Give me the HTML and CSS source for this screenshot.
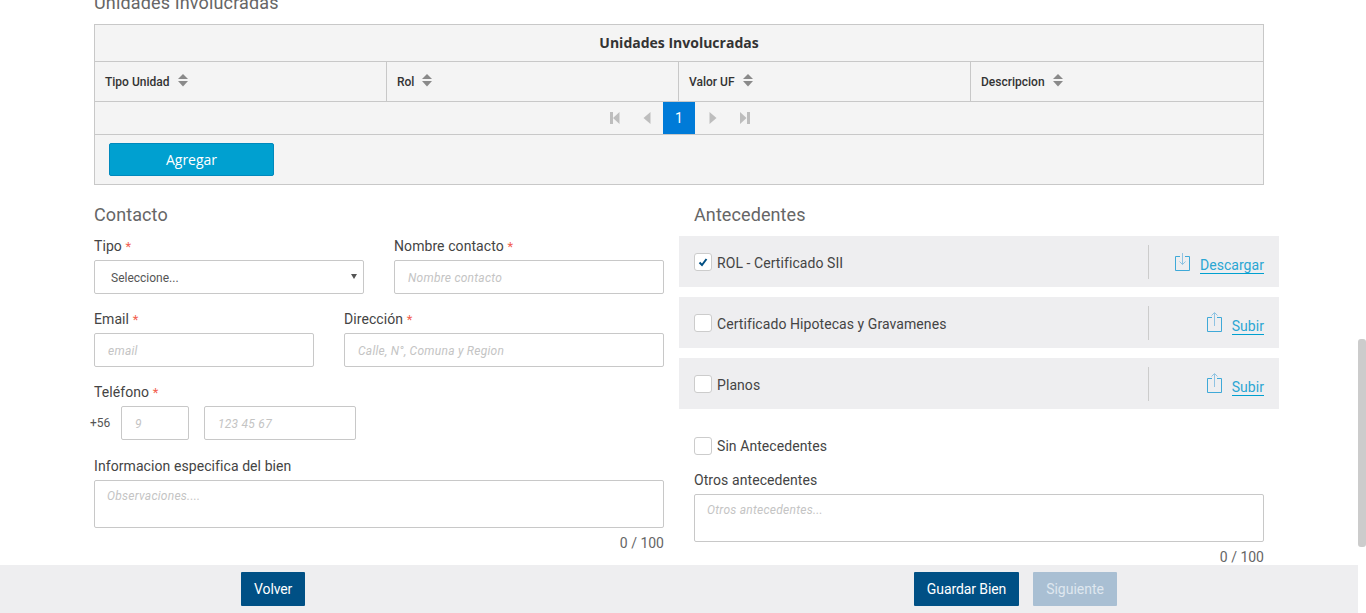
FILE: index.html
```html
<!DOCTYPE html>
<html lang="es">
<head>
<meta charset="utf-8">
<title>Bien</title>
<link rel="stylesheet" href="styles.css">
</head>
<body>
<div class="page">
  <main class="content">
    <h2 class="section-title clipped">Unidades Involucradas</h2>
    <section class="grid-table">
      <div class="table-title">Unidades Involucradas</div>
      <div class="table-head">
        <div class="th">Tipo Unidad <svg class="sort" viewBox="0 0 10 13"><path d="M5 0l5 5H0z"/><path d="M0 7h10l-5 5.500z"/></svg></div>
        <div class="th">Rol <svg class="sort" viewBox="0 0 10 13"><path d="M5 0l5 5H0z"/><path d="M0 7h10l-5 5.500z"/></svg></div>
        <div class="th">Valor UF <svg class="sort" viewBox="0 0 10 13"><path d="M5 0l5 5H0z"/><path d="M0 7h10l-5 5.500z"/></svg></div>
        <div class="th">Descripcion <svg class="sort" viewBox="0 0 10 13"><path d="M5 0l5 5H0z"/><path d="M0 7h10l-5 5.500z"/></svg></div>
      </div>
      <div class="pager">
        <span class="pg back"><svg viewBox="0 0 10 12"><path d="M0 0h3v12H0zM9.500 0v12L3 6z"/></svg></span>
        <span class="pg back"><svg viewBox="0 0 10 12"><path d="M8.500 0v12L1.500 6z"/></svg></span>
        <span class="pg current">1</span>
        <span class="pg fwd"><svg viewBox="0 0 10 12"><path d="M1.500 0v12l7-6z"/></svg></span>
        <span class="pg fwd"><svg viewBox="0 0 10 12"><path d="M0 0v12l6.500-6zM7 0h3v12H7z"/></svg></span>
      </div>
      <div class="table-foot"><button class="btn-add" type="button">Agregar</button></div>
    </section>

    <div class="columns">
      <section class="col">
        <h2 class="section-title">Contacto</h2>
        <div class="row two-even">
          <div class="field">
            <label class="lbl">Tipo <span class="req">*</span></label>
            <div class="select">Seleccione...<span class="caret"></span></div>
          </div>
          <div class="field">
            <label class="lbl">Nombre contacto <span class="req">*</span></label>
            <input class="input" placeholder="Nombre contacto">
          </div>
        </div>
        <div class="row two-wide">
          <div class="field">
            <label class="lbl">Email <span class="req">*</span></label>
            <input class="input" placeholder="email">
          </div>
          <div class="field">
            <label class="lbl">Dirección <span class="req">*</span></label>
            <input class="input" placeholder="Calle, N°, Comuna y Region">
          </div>
        </div>
        <div class="field phone-field">
          <label class="lbl">Teléfono <span class="req">*</span></label>
          <div class="phone">
            <span class="prefix">+56</span>
            <input class="input code" placeholder="9">
            <input class="input number" placeholder="123 45 67">
          </div>
        </div>
        <div class="field info-field">
          <label class="lbl">Informacion especifica del bien</label>
          <textarea class="area" placeholder="Observaciones...."></textarea>
          <div class="counter">0 / 100</div>
        </div>
      </section>

      <section class="col">
        <h2 class="section-title">Antecedentes</h2>
        <div class="doc-list">
          <div class="doc">
            <span class="check"><svg viewBox="0 0 16 16"><path d="M4.500 8.500l2.500 2.500 4.500-6" fill="none" stroke="#004f83" stroke-width="2"/></svg></span>
            <span class="doc-name">ROL - Certificado SII</span>
            <span class="doc-action">
              <svg class="doc-icon down" viewBox="0 0 15 18"><path d="M5 3.500H.5v14h14v-14H10" fill="none" stroke="#3fa9d8"/><path d="M7.500 0v11.500M4.500 8.500l3 3 3-3" fill="none" stroke="#8fc3e2"/></svg>
              <a class="doc-link">Descargar</a>
            </span>
          </div>
          <div class="doc">
            <span class="check"></span>
            <span class="doc-name">Certificado Hipotecas y Gravamenes</span>
            <span class="doc-action">
              <svg class="doc-icon" viewBox="0 0 15 20"><path d="M5 5.500H.5v14h14v-14H10" fill="none" stroke="#3fa9d8"/><path d="M7.500 14V1M4.500 3.500l3-3 3 3" fill="none" stroke="#8fc3e2"/></svg>
              <a class="doc-link">Subir</a>
            </span>
          </div>
          <div class="doc">
            <span class="check"></span>
            <span class="doc-name">Planos</span>
            <span class="doc-action">
              <svg class="doc-icon" viewBox="0 0 15 20"><path d="M5 5.500H.5v14h14v-14H10" fill="none" stroke="#3fa9d8"/><path d="M7.500 14V1M4.500 3.500l3-3 3 3" fill="none" stroke="#8fc3e2"/></svg>
              <a class="doc-link">Subir</a>
            </span>
          </div>
        </div>
        <div class="no-docs"><span class="check"></span><span class="doc-name">Sin Antecedentes</span></div>
        <div class="field">
          <label class="lbl">Otros antecedentes</label>
          <textarea class="area" placeholder="Otros antecedentes..."></textarea>
          <div class="counter">0 / 100</div>
        </div>
      </section>
    </div>
  </main>

  <footer class="footer">
    <button class="btn" type="button">Volver</button>
    <div class="footer-right">
      <button class="btn" type="button">Guardar Bien</button>
      <button class="btn disabled" type="button">Siguiente</button>
    </div>
  </footer>
  <div class="scroll-thumb"></div>
</div>
</body>
</html>
```
FILE: styles.css
```css
* { box-sizing: border-box; }
html, body { margin: 0; height: 100%; overflow: hidden; background: #fff; }
body { font-family: Roboto, "Liberation Sans", sans-serif; color: #444; font-size: 14px; }
.page { position: relative; width: 1366px; height: 613px; overflow: hidden; }
.content { width: 1358px; height: 565px; padding: 0 94px; overflow: hidden; }

.section-title { margin: 0; font-size: 18px; font-weight: 400; line-height: 22px; color: #666; letter-spacing: 0.1px; }
.section-title.clipped { margin-top: -8px; height: 32px; letter-spacing: 0.15px; }

.grid-table { border: 1px solid #c8c8c8; background: #f4f4f4; height: 161px; }
.table-title { height: 37px; line-height: 35px; text-align: center; font-family: "Open Sans", sans-serif; font-weight: 700; font-size: 14px; color: #333; border-bottom: 1px solid #c8c8c8; }
.table-head { display: grid; grid-template-columns: repeat(4, 1fr); height: 40px; border-bottom: 1px solid #c8c8c8; }
.th { display: flex; align-items: center; gap: 8px; padding: 0 10px; font-size: 12px; font-weight: 500; color: #333; border-right: 1px solid #c8c8c8; }
.th:last-child { border-right: 0; }
.sort { width: 10px; height: 13px; fill: #8a8a8a; margin-top: -2px; }
.pager { display: flex; justify-content: center; height: 33px; border-bottom: 1px solid #c8c8c8; }
.pg { width: 32px; height: 32px; display: flex; align-items: center; justify-content: center; }
.pg svg { width: 10px; height: 12px; fill: #bdbdbd; }
.pg.back svg { margin-right: 1px; }
.pg.fwd svg { margin-left: 3px; }
.pg.current { background: #007bd8; color: #fff; font-size: 14px; }
.table-foot { padding: 8px 14px; }
.btn-add { display: block; width: 165px; height: 33px; border: 1px solid #0089bd; border-radius: 2px; background: #00a0d0; color: #fff; font: 400 14px "Open Sans", sans-serif; }

.columns { display: grid; grid-template-columns: 570px 570px; column-gap: 30px; margin-top: 19px; }
.columns .section-title { margin-bottom: 10px; }
.field { display: flex; flex-direction: column; }
.lbl { font-size: 14px; line-height: 20px; height: 24px; color: #444; letter-spacing: 0.08px; }
.req { color: #f2604f; font-size: 13px; }
.input, .area, .select { border: 1px solid #c8c8c8; border-radius: 2px; background: #fff; font: 400 12px Roboto, sans-serif; color: #555; outline: 0; }
.input { display: block; width: 100%; height: 34px; padding: 2px 13px 0; }
::placeholder { color: #c4c4c4; font-style: italic; font-size: 12px; letter-spacing: 0.25px; opacity: 1; }
.select { position: relative; height: 34px; line-height: 34px; padding-left: 16px; }
.caret { position: absolute; right: 6px; top: 13px; border: 3px solid transparent; border-top: 5px solid #555; border-bottom: 0; }
.row { display: grid; column-gap: 30px; margin-bottom: 15px; }
.two-even { grid-template-columns: 270px 270px; }
.two-wide { grid-template-columns: 220px 320px; }
.phone-field { margin-bottom: 16px; }
.phone { display: flex; align-items: center; margin-left: -4px; }
.prefix { width: 31px; font-size: 12px; color: #555; }
.code { width: 68px; }
.number { width: 152px; margin-left: 15px; }
.area { display: block; width: 100%; height: 48px; padding: 8px 12px; resize: none; }
.counter { text-align: right; font-size: 14px; line-height: 20px; margin-top: 5px; color: #666; }

.doc-list { margin: 0 -15px; }
.doc { display: flex; align-items: center; height: 51px; margin-bottom: 10px; padding: 0 15px; background: #eeeef0; }
.check { width: 18px; height: 18px; flex: none; border: 1px solid #ccc; border-radius: 3px; background: #fff; display: block; margin-right: 5px; }
.check svg { display: block; width: 16px; height: 16px; }
.doc-name { font-size: 14px; color: #444; letter-spacing: 0.07px; }
.doc .doc-name { padding-top: 2px; }
.doc-action { margin-left: auto; width: 116px; height: 34px; border-left: 1px solid #ccc; display: flex; justify-content: flex-end; align-items: flex-end; gap: 10px; }
.doc-icon { width: 15px; height: 20px; margin-bottom: 8px; flex: none; }
.doc-icon.down { height: 18px; }
.doc-link { color: #2ba6d3; font-size: 14px; letter-spacing: 0.05px; line-height: 16px; border-bottom: 1px solid #00a0d0; margin-bottom: 5px; }
.no-docs { display: flex; align-items: center; margin: 28px 0 15px; height: 18px; }

.footer { display: flex; justify-content: space-between; align-items: flex-start; width: 1358px; height: 48px; padding: 7px 241px 0; background: #eeeef0; }
.footer-right { display: flex; gap: 14px; }
.btn { height: 34px; padding: 0 13px; border: 0; border-radius: 1px; background: #005085; color: #fff; font: 400 14px Roboto, sans-serif; letter-spacing: -0.1px; }
.btn.disabled { background: #a9bfd3; color: #dfe7ef; letter-spacing: 0; }
.scroll-thumb { position: absolute; right: 0; top: 339px; width: 8px; height: 208px; background: #ccc; border-radius: 3px; }
```
